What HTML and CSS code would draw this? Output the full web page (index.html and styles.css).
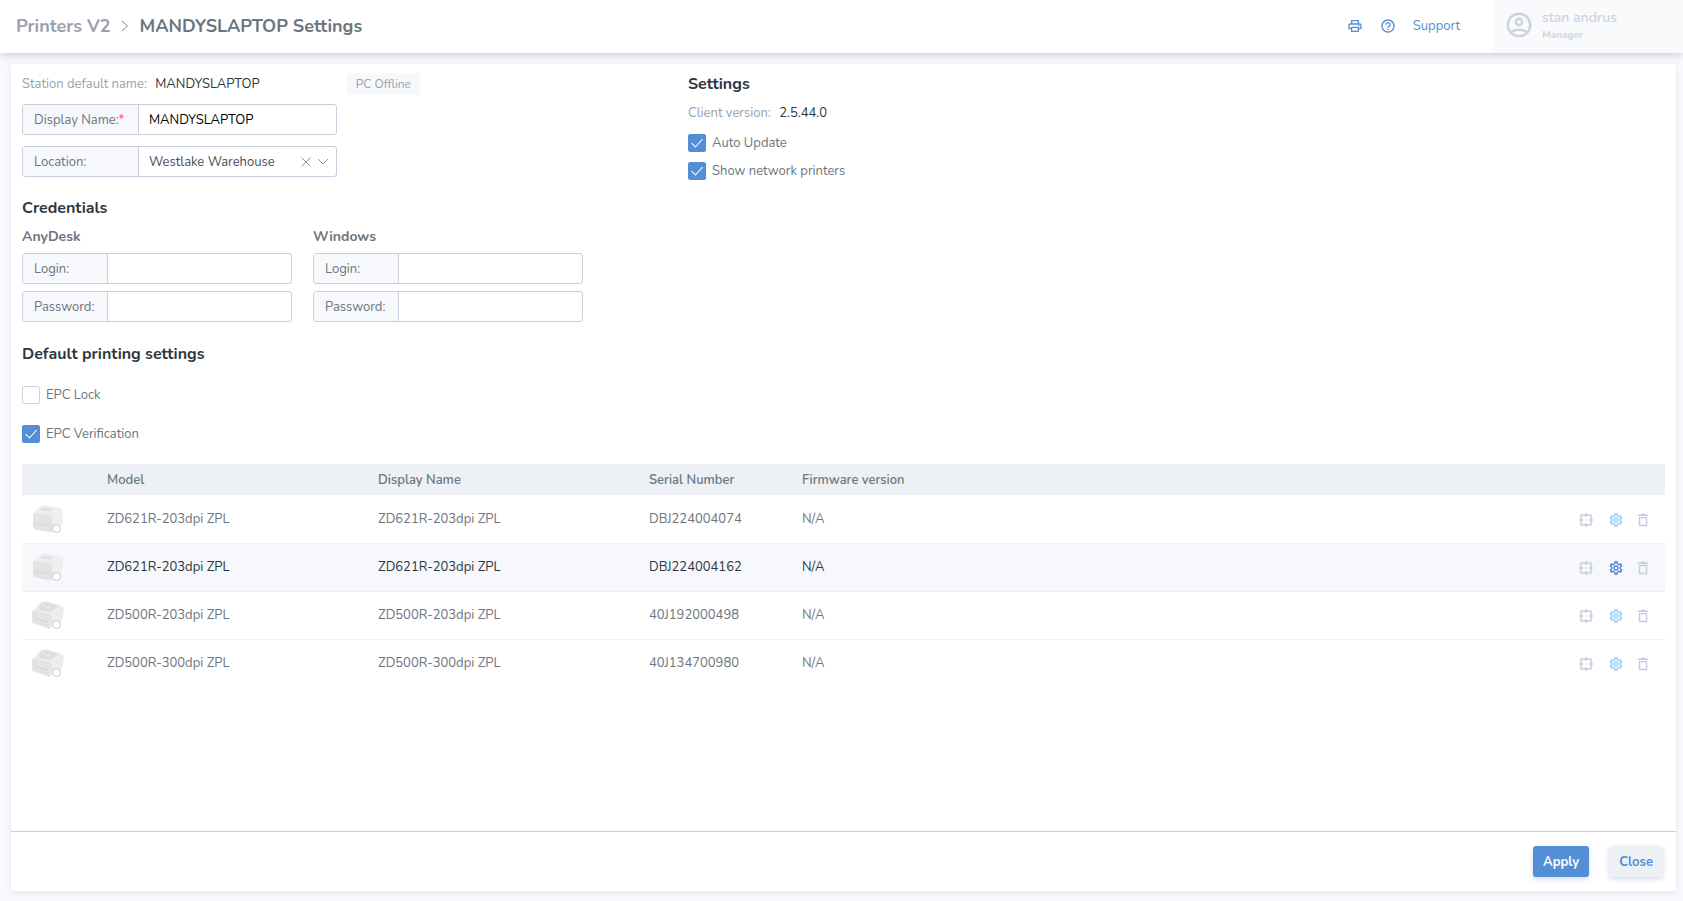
FILE: index.html
```html
<!DOCTYPE html>
<html lang="en">
<head>
    <meta charset="UTF-8">
    <meta name="viewport" content="width=device-width, initial-scale=1.0">
    <title>Printers V2 - MANDYSLAPTOP Settings</title>
    <link rel="stylesheet" href="styles.css">
</head>
<body>
    <!-- Shared icons -->
    <svg class="sprite" aria-hidden="true">
        <symbol id="icon-print" viewBox="0 0 24 24">
            <path d="M19 8h-1V3H6v5H5c-1.66 0-3 1.34-3 3v6h4v4h12v-4h4v-6c0-1.66-1.34-3-3-3zM8 5h8v3H8V5zm8 12v2H8v-4h8v2zm2-2v-2H6v2H4v-4c0-.55.45-1 1-1h14c.55 0 1 .45 1 1v4h-2z"/>
            <circle cx="18" cy="11.5" r="1"/>
        </symbol>
        <symbol id="icon-help" viewBox="0 0 24 24">
            <path d="M11 18h2v-2h-2v2zm1-16C6.48 2 2 6.48 2 12s4.48 10 10 10 10-4.48 10-10S17.52 2 12 2zm0 18c-4.41 0-8-3.59-8-8s3.59-8 8-8 8 3.59 8 8-3.59 8-8 8zm0-14c-2.21 0-4 1.79-4 4h2c0-1.1.9-2 2-2s2 .9 2 2c0 2-3 1.75-3 5h2c0-2.25 3-2.5 3-5 0-2.21-1.79-4-4-4z"/>
        </symbol>
        <symbol id="icon-user" viewBox="0 0 24 24">
            <g fill="none" stroke="currentColor" stroke-width="2">
                <circle cx="12" cy="12" r="9"/>
                <circle cx="12" cy="9.5" r="2.5"/>
                <path d="M5.5 18.2c1.3-1.6 4-2.4 6.5-2.4s5.2.8 6.5 2.4"/>
            </g>
        </symbol>
        <symbol id="icon-gear" viewBox="0 0 24 24">
            <path d="M19.43 12.98c.04-.32.07-.64.07-.98s-.03-.66-.07-.98l2.11-1.65c.19-.15.24-.42.12-.64l-2-3.46c-.09-.16-.26-.25-.44-.25-.06 0-.12.01-.17.03l-2.49 1c-.52-.4-1.08-.73-1.69-.98l-.38-2.65C14.46 2.18 14.25 2 14 2h-4c-.25 0-.46.18-.49.42l-.38 2.65c-.61.25-1.17.59-1.69.98l-2.49-1c-.06-.02-.12-.03-.18-.03-.17 0-.34.09-.43.25l-2 3.46c-.13.22-.07.49.12.64l2.11 1.65c-.04.32-.07.65-.07.98s.03.66.07.98l-2.11 1.65c-.19.15-.24.42-.12.64l2 3.46c.09.16.26.25.44.25.06 0 .12-.01.17-.03l2.49-1c.52.4 1.08.73 1.69.98l.38 2.65c.03.24.24.42.49.42h4c.25 0 .46-.18.49-.42l.38-2.65c.61-.25 1.17-.59 1.69-.98l2.49 1c.06.02.12.03.18.03.17 0 .34-.09.43-.25l2-3.46c.12-.22.07-.49-.12-.64l-2.11-1.65zm-1.98-1.71c.04.31.05.52.05.73 0 .21-.02.43-.05.73l-.14 1.13.89.7 1.08.84-.7 1.21-1.27-.51-1.04-.42-.9.68c-.43.32-.84.56-1.25.73l-1.06.43-.16 1.13-.2 1.35h-1.4l-.19-1.35-.16-1.13-1.06-.43c-.43-.18-.83-.41-1.23-.71l-.91-.7-1.06.43-1.27.51-.7-1.21 1.08-.84.89-.7-.14-1.13c-.03-.31-.05-.54-.05-.74s.02-.43.05-.73l.14-1.13-.89-.7-1.08-.84.7-1.21 1.27.51 1.04.42.9-.68c.43-.32.84-.56 1.25-.73l1.06-.43.16-1.13.2-1.35h1.39l.19 1.35.16 1.13 1.06.43c.43.18.83.41 1.23.71l.91.7 1.06-.43 1.27-.51.7 1.21-1.07.85-.89.7.14 1.13zM12 8c-2.21 0-4 1.79-4 4s1.79 4 4 4 4-1.79 4-4-1.79-4-4-4zm0 6c-1.1 0-2-.9-2-2s.9-2 2-2 2 .9 2 2-.9 2-2 2z"/>
        </symbol>
        <symbol id="icon-calibrate" viewBox="0 0 16 16">
            <path fill="none" stroke="currentColor" stroke-width="1.5" d="M3 3h10v10H3zM8 1v4M8 11v4M1 8h4M11 8h4M7.2 8h1.6"/>
        </symbol>
        <symbol id="icon-trash" viewBox="0 0 16 16">
            <path d="M3 2.5h3l.5-1h3l.5 1h3V4H3z"/>
            <path fill="none" stroke="currentColor" stroke-width="1.5" d="M4.5 5.5h7v8h-7z"/>
        </symbol>
        <symbol id="printer-zd621" viewBox="0 0 32 30">
            <path fill="#efefef" d="M1 9 9 2q1-1 3-.7L28 4q3 1 3 4l-1 13-10 7z"/>
            <path fill="#e2e3e3" d="M1 12q0-3 4-3l12 2q3 .6 3 4v13.5L5 26q-4-1-4-4z"/>
            <path fill="#dde2e0" d="m10 3.5 11 1.5-2 2.5L8 6z"/>
            <path fill="none" stroke="#d6d8d8" d="m1.5 19 18 3"/>
            <path fill="#fff" d="m4 12.500 2 .4v1l-2-.4z"/>
        </symbol>
        <symbol id="printer-zd500" viewBox="0 0 32 30">
            <path fill="#ececec" d="M0 13q0-2 2-4l6-6q2-2 7-1.500L28 5q4 1.500 4 5l-2 11-12 7z"/>
            <path fill="#e3e3e3" d="M0 13q0-3 4-2l13 3q3 1 3 4l-2 11L3 24q-3-1-3-4z"/>
            <path fill="#dedede" d="m8 4 6-2 12 4-8 6-12-3z"/>
            <path fill="#e9e9e9" d="m11 4 3 1-2 2-3-1zm5 1.500 3 1-2 2.500-4-1z"/>
            <path fill="none" stroke="#d2d2d2" d="m2 18 14 4"/>
        </symbol>
    </svg>

    <header class="topbar">
        <nav class="breadcrumb">
            <a href="#">Printers V2</a>
            <svg class="breadcrumb-arrow" viewBox="0 0 8 12"><path d="m1 1 5.500 5L1 11"/></svg>
            <h1>MANDYSLAPTOP Settings</h1>
        </nav>
        <div class="topbar-links">
            <a href="#" aria-label="Printers"><svg class="icon"><use href="#icon-print"/></svg></a>
            <a href="#" aria-label="Help"><svg class="icon"><use href="#icon-help"/></svg></a>
            <a href="#">Support</a>
        </div>
        <div class="user">
            <svg class="user-icon"><use href="#icon-user"/></svg>
            <div>
                <div class="user-name">stan andrus</div>
                <div class="user-role">Manager</div>
            </div>
        </div>
    </header>

    <main class="panel">
        <div class="panel-body">
            <div class="columns">
                <section class="station">
                    <div class="station-name">
                        <p class="info">Station default name: <span>MANDYSLAPTOP</span></p>
                        <span class="badge">PC Offline</span>
                    </div>
                    <div class="field wide">
                        <label for="display-name">Display Name:<span class="required">*</span></label>
                        <input type="text" id="display-name" value="MANDYSLAPTOP">
                    </div>
                    <div class="field wide">
                        <label for="location">Location:</label>
                        <select id="location">
                            <option>Westlake Warehouse</option>
                        </select>
                        <button type="button" class="clear" aria-label="Clear location">
                            <svg viewBox="0 0 10 10"><path d="m.5.5 9 9M9.500.5l-9 9"/></svg>
                        </button>
                        <svg class="chevron" viewBox="0 0 12 12"><path d="m1 3 5 5 5-5"/></svg>
                    </div>

                    <h2>Credentials</h2>
                    <div class="credentials">
                        <div>
                            <h3>AnyDesk</h3>
                            <div class="field">
                                <label for="anydesk-login">Login:</label>
                                <input type="text" id="anydesk-login">
                            </div>
                            <div class="field">
                                <label for="anydesk-password">Password:</label>
                                <input type="password" id="anydesk-password">
                            </div>
                        </div>
                        <div>
                            <h3>Windows</h3>
                            <div class="field">
                                <label for="windows-login">Login:</label>
                                <input type="text" id="windows-login">
                            </div>
                            <div class="field">
                                <label for="windows-password">Password:</label>
                                <input type="password" id="windows-password">
                            </div>
                        </div>
                    </div>
                </section>

                <section class="client">
                    <h2>Settings</h2>
                    <p class="info">Client version: <span>2.5.44.0</span></p>
                    <label class="check"><input type="checkbox" checked>Auto Update</label>
                    <label class="check"><input type="checkbox" checked>Show network printers</label>
                </section>
            </div>

            <section class="defaults">
                <h2>Default printing settings</h2>
                <label class="check"><input type="checkbox">EPC Lock</label>
                <label class="check"><input type="checkbox" checked>EPC Verification</label>
            </section>

            <table class="printers">
                <thead>
                    <tr>
                        <th class="col-image"></th>
                        <th class="col-name">Model</th>
                        <th class="col-name">Display Name</th>
                        <th class="col-serial">Serial Number</th>
                        <th>Firmware version</th>
                        <th class="col-actions"></th>
                    </tr>
                </thead>
                <tbody>
                    <tr>
                        <td><div class="printer"><svg><use href="#printer-zd621"/></svg><i class="dot"></i></div></td>
                        <td>ZD621R-203dpi ZPL</td>
                        <td>ZD621R-203dpi ZPL</td>
                        <td>DBJ224004074</td>
                        <td>N/A</td>
                        <td>
                            <div class="actions">
                                <button type="button" aria-label="Calibrate"><svg class="icon"><use href="#icon-calibrate"/></svg></button>
                                <button type="button" class="gear" aria-label="Settings"><svg class="icon"><use href="#icon-gear"/></svg></button>
                                <button type="button" aria-label="Delete"><svg class="icon"><use href="#icon-trash"/></svg></button>
                            </div>
                        </td>
                    </tr>
                    <tr class="active">
                        <td><div class="printer"><svg><use href="#printer-zd621"/></svg><i class="dot"></i></div></td>
                        <td>ZD621R-203dpi ZPL</td>
                        <td>ZD621R-203dpi ZPL</td>
                        <td>DBJ224004162</td>
                        <td>N/A</td>
                        <td>
                            <div class="actions">
                                <button type="button" aria-label="Calibrate"><svg class="icon"><use href="#icon-calibrate"/></svg></button>
                                <button type="button" class="gear" aria-label="Settings"><svg class="icon"><use href="#icon-gear"/></svg></button>
                                <button type="button" aria-label="Delete"><svg class="icon"><use href="#icon-trash"/></svg></button>
                            </div>
                        </td>
                    </tr>
                    <tr>
                        <td><div class="printer"><svg><use href="#printer-zd500"/></svg><i class="dot"></i></div></td>
                        <td>ZD500R-203dpi ZPL</td>
                        <td>ZD500R-203dpi ZPL</td>
                        <td>40J192000498</td>
                        <td>N/A</td>
                        <td>
                            <div class="actions">
                                <button type="button" aria-label="Calibrate"><svg class="icon"><use href="#icon-calibrate"/></svg></button>
                                <button type="button" class="gear" aria-label="Settings"><svg class="icon"><use href="#icon-gear"/></svg></button>
                                <button type="button" aria-label="Delete"><svg class="icon"><use href="#icon-trash"/></svg></button>
                            </div>
                        </td>
                    </tr>
                    <tr>
                        <td><div class="printer"><svg><use href="#printer-zd500"/></svg><i class="dot"></i></div></td>
                        <td>ZD500R-300dpi ZPL</td>
                        <td>ZD500R-300dpi ZPL</td>
                        <td>40J134700980</td>
                        <td>N/A</td>
                        <td>
                            <div class="actions">
                                <button type="button" aria-label="Calibrate"><svg class="icon"><use href="#icon-calibrate"/></svg></button>
                                <button type="button" class="gear" aria-label="Settings"><svg class="icon"><use href="#icon-gear"/></svg></button>
                                <button type="button" aria-label="Delete"><svg class="icon"><use href="#icon-trash"/></svg></button>
                            </div>
                        </td>
                    </tr>
                </tbody>
            </table>
        </div>

        <footer class="panel-footer">
            <button type="button" class="btn primary">Apply</button>
            <button type="button" class="btn">Close</button>
        </footer>
    </main>
</body>
</html>
```

FILE: styles.css
```css
* {
    box-sizing: border-box;
}
body {
    margin: 0;
    min-height: 100vh;
    display: flex;
    flex-direction: column;
    background: #f9faff;
    color: #6c757d;
    font-family: Nunito, Lato, sans-serif;
    font-size: 13px;
    line-height: 20px;
}
h1, h2, h3, p {
    margin: 0;
}
a {
    color: #548ed6;
    text-decoration: none;
}
button, input, select {
    font: inherit;
    color: inherit;
}
button {
    cursor: pointer;
}
.sprite {
    position: absolute;
    width: 0;
    height: 0;
}
.icon {
    display: block;
    width: 16px;
    height: 16px;
    fill: currentColor;
}

/* Top bar */
.topbar {
    display: flex;
    align-items: center;
    height: 53px;
    background: #fff;
    box-shadow: 0 2px 8px rgba(60, 70, 90, 0.25);
}
.breadcrumb {
    display: flex;
    align-items: center;
    flex: 1;
    padding: 0 0 2px 16px;
    font-size: 18px;
    font-weight: bold;
}
.breadcrumb a {
    color: #98a1ab;
}
.breadcrumb h1 {
    font-size: 18px;
}
.breadcrumb-arrow {
    width: 8px;
    height: 12px;
    margin: 0 11px 0 10px;
    fill: none;
    stroke: #7c858e;
}
.topbar-links {
    display: flex;
    align-items: center;
    gap: 17px;
    padding: 0 34px 2px 0;
}
.user {
    display: flex;
    align-items: center;
    gap: 8px;
    width: 189px;
    height: 100%;
    padding: 0 0 4px 10px;
    background: #f9fafc;
    color: #ced3e0;
}
.user-icon {
    width: 30px;
    height: 30px;
    fill: currentColor;
}
.user-name {
    font-size: 14px;
    font-weight: 600;
    line-height: 20px;
}
.user-role {
    font-size: 10px;
    font-weight: bold;
    line-height: 14px;
}

/* Panel */
.panel {
    display: flex;
    flex-direction: column;
    flex: 1;
    margin: 11px 7px 10px 11px;
    background: #fff;
    box-shadow: 0 2px 6px rgba(60, 70, 90, 0.12);
}
.panel-body {
    flex: 1;
    padding: 9px 11px;
}
.panel-footer {
    display: flex;
    justify-content: flex-end;
    gap: 20px;
    padding: 14px 13px;
    border-top: 1px solid #c9cddd;
}
.columns {
    display: flex;
}
.station {
    width: 666px;
}
h2 {
    color: #2d3640;
    font-size: 16px;
    line-height: 22px;
}
h3 {
    font-size: 14px;
    line-height: 20px;
}
.info {
    color: #98a1ab;
}
.info span {
    margin-left: 5px;
    color: #2d3640;
}
.station-name {
    display: flex;
    width: 398px;
    justify-content: space-between;
    align-items: center;
    margin-bottom: 9px;
}
.badge {
    padding: 0 9px;
    border-radius: 3px;
    background: #f6f8fc;
    color: #98a1ab;
    font-size: 12px;
    line-height: 22px;
}

/* Form fields */
.field {
    display: flex;
    align-items: center;
    width: 270px;
    height: 31px;
    margin-bottom: 7px;
    border: 1px solid #c9cddd;
    border-radius: 3px;
    background: #fff;
    overflow: hidden;
}
.field label {
    width: 85px;
    padding-left: 11px;
    border-right: 1px solid #c9cddd;
    background: #f6f8fc;
    line-height: 30px;
}
.field input,
.field select {
    flex: 1;
    min-width: 0;
    padding: 0 10px;
    border: 0;
    outline: 0;
    background: transparent;
    color: #000;
    appearance: none;
}
.field select {
    color: #495057;
}
.field.wide {
    width: 315px;
    margin-bottom: 11px;
}
.field.wide label {
    width: 116px;
}
.required {
    color: #fa5c6c;
}
.clear {
    padding: 0;
    border: 0;
    background: none;
}
.clear svg {
    display: block;
    width: 10px;
    height: 10px;
}
.clear svg,
.chevron {
    fill: none;
    stroke: #8c939b;
}
.chevron {
    width: 12px;
    height: 12px;
    margin: 0 7px 0 6px;
    pointer-events: none;
}
.station h2 {
    margin: 20px 0 8px;
}
.station h3 {
    margin-bottom: 6px;
}
.credentials {
    display: flex;
    gap: 21px;
}

/* Checkboxes */
.check {
    display: flex;
    align-items: center;
    gap: 6px;
    width: fit-content;
}
.check input {
    appearance: none;
    width: 18px;
    height: 18px;
    margin: 0;
    border: 1px solid #ced4da;
    border-radius: 2px;
    background: #fff;
}
.check input:checked {
    display: grid;
    place-items: center;
    border-color: #548ed6;
    background: #548ed6;
}
.check input:checked::before {
    content: "";
    width: 5px;
    height: 10px;
    margin-top: -3px;
    border: solid #fff;
    border-width: 0 1px 1px 0;
    transform: rotate(42deg);
}
.client .info {
    margin: 8px 0 10px;
}
.client .check {
    margin-bottom: 8px;
}
.defaults {
    margin-bottom: 20px;
}
.defaults h2 {
    margin: 14px 0 20px;
}
.defaults .check {
    margin-bottom: 19px;
}

/* Printers table */
.printers {
    width: 100%;
    border-collapse: collapse;
    table-layout: fixed;
}
.printers th {
    height: 31px;
    padding: 0;
    background: #edf1f6;
    font-weight: 600;
    text-align: left;
}
.printers td {
    height: 48px;
    padding: 0;
    border-bottom: 1px solid #edeff5;
}
.printers tr:last-child td {
    border-bottom: 0;
}
.col-image {
    width: 85px;
}
.col-name {
    width: 271px;
}
.col-serial {
    width: 153px;
}
.col-actions {
    width: 120px;
}
.active {
    background: #f6f8fc;
    color: #2d3640;
}
.printer {
    position: relative;
    width: 32px;
    height: 30px;
    margin-left: 10px;
}
.printer svg {
    width: 32px;
    height: 30px;
}
.dot {
    position: absolute;
    right: 3px;
    bottom: 1px;
    width: 9px;
    height: 9px;
    border: 1px solid #c3c8de;
    border-radius: 50%;
    background: #fff;
}
.actions {
    display: flex;
    justify-content: flex-end;
    gap: 11px;
    padding: 2px 14px 0 0;
}
.actions button {
    padding: 0;
    border: 0;
    background: none;
    color: #c9cddd;
}
.actions .gear {
    margin-left: 3px;
    color: #93cdf8;
}
.active .gear {
    color: #4a7fd0;
}

/* Buttons */
.btn {
    height: 31px;
    padding: 0 10px;
    border: 0;
    border-radius: 3px;
    background: #edf1f6;
    box-shadow: 0 2px 5px rgba(84, 110, 180, 0.25);
    color: #548ed6;
    font-weight: bold;
}
.primary {
    background: #548ed6;
    color: #fff;
}
```
